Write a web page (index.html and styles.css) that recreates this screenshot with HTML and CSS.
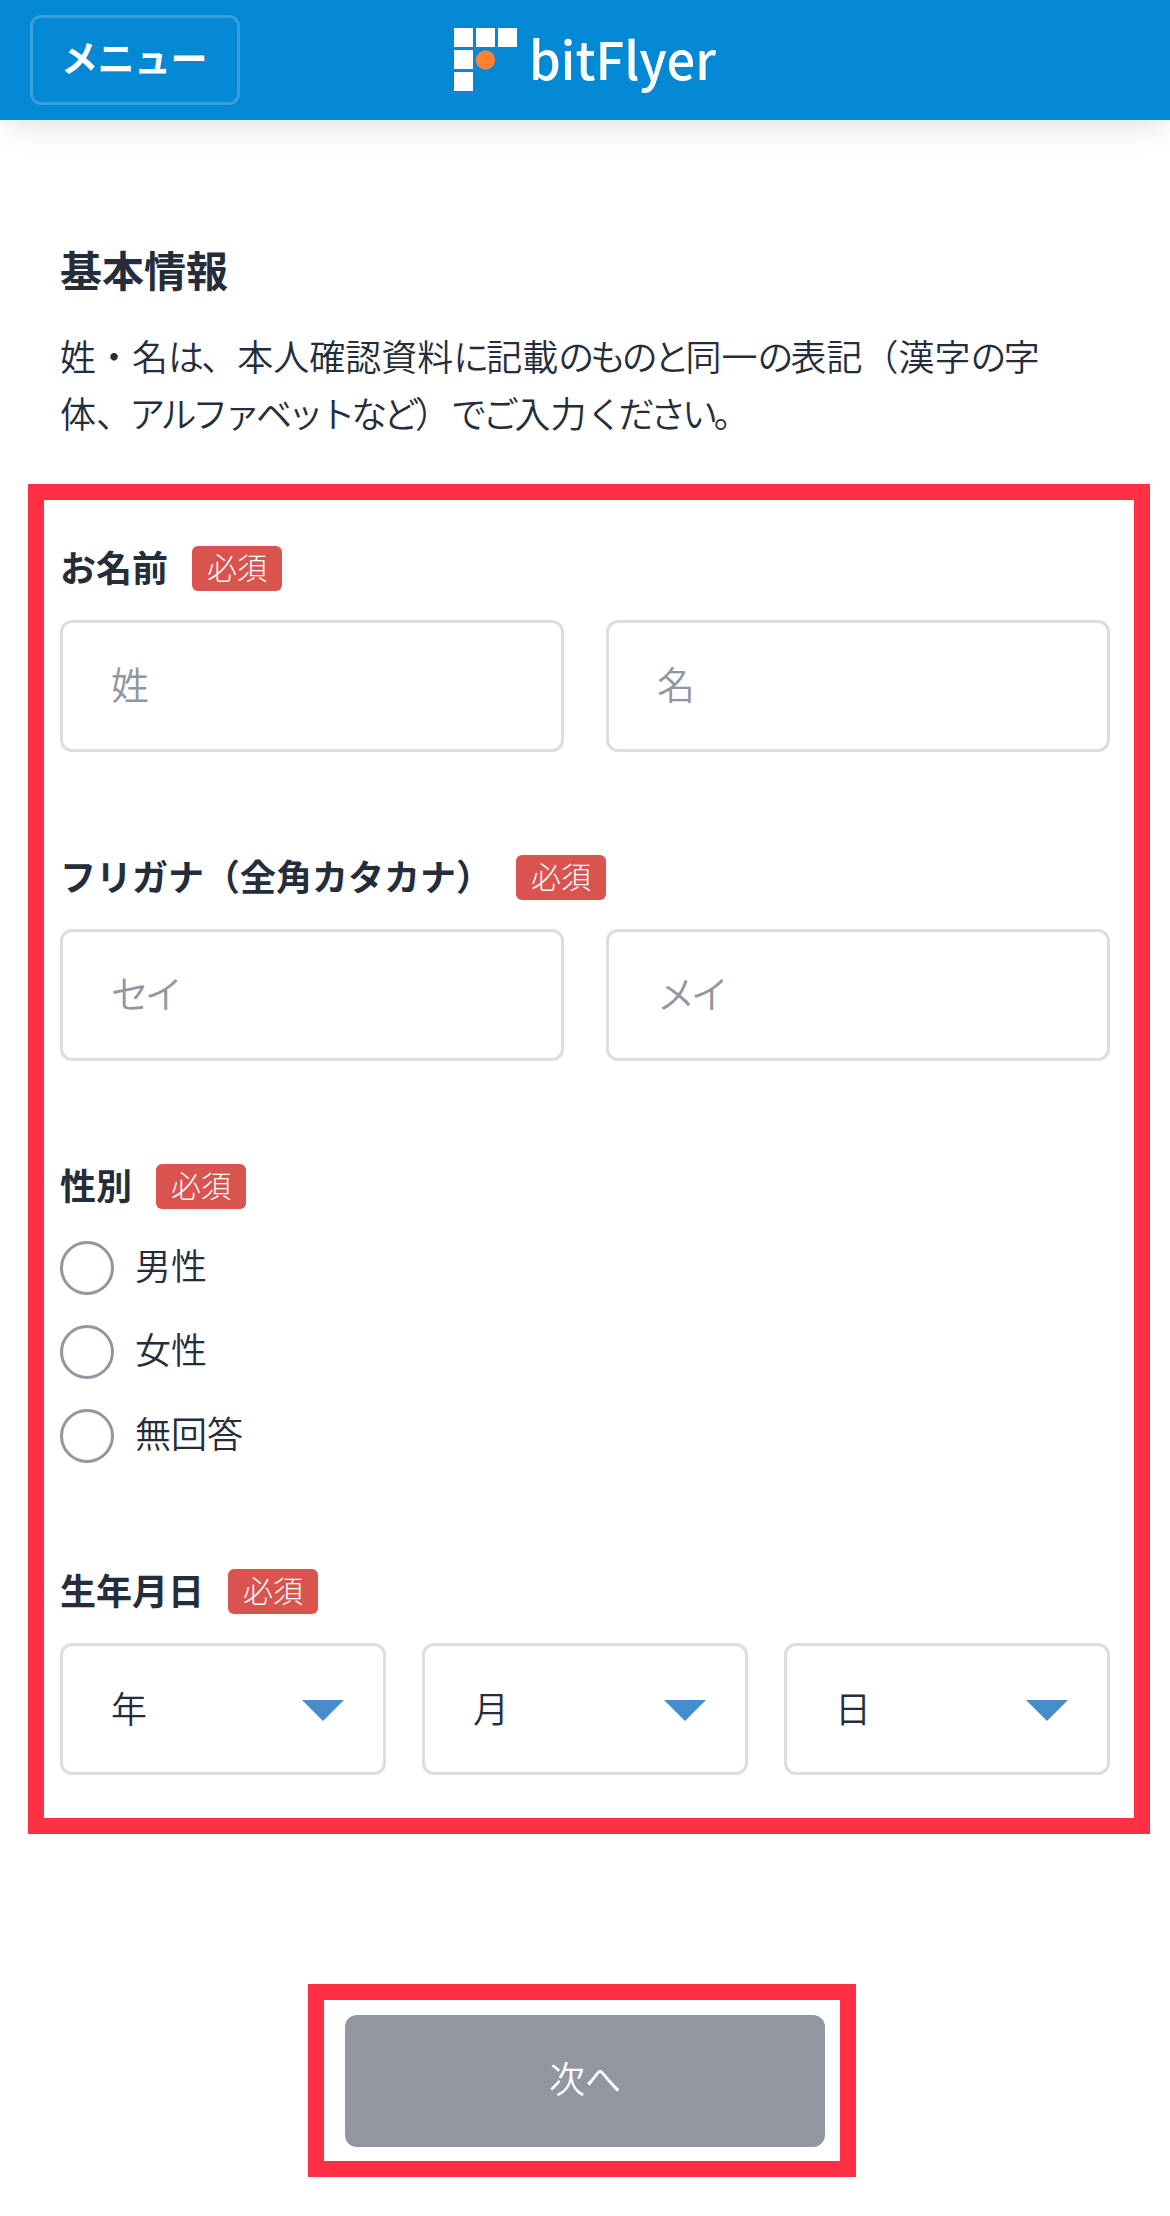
FILE: index.html
```
<!DOCTYPE html>
<html lang="ja">
<head>
    <meta charset="UTF-8">
    <meta name="viewport" content="width=device-width, initial-scale=1.0">
    <title>基本情報 | bitFlyer</title>
    <link rel="stylesheet" href="styles.css">
</head>
<body>
    <header class="header">
        <button type="button" class="menu-button">メニュー</button>
        <svg class="logo" width="270" height="90" viewBox="0 -10 270 90">
            <g fill="#fff">
                <rect x="0" y="3" width="19" height="19"/>
                <rect x="22" y="3" width="19" height="19"/>
                <rect x="44" y="3" width="19" height="19"/>
                <rect x="0" y="25" width="19" height="19"/>
                <rect x="0" y="47" width="19" height="19"/>
            </g>
            <circle cx="31.5" cy="35" r="9.7" fill="#ff8133"/>
            <text class="logo-text" x="75" y="54.5" textLength="187" lengthAdjust="spacingAndGlyphs">bitFlyer</text>
        </svg>
    </header>

    <main>
        <section class="intro">
            <h1>基本情報</h1>
            <p>姓・名<span class="kana">は</span>、本人確認資料<span class="kana">に</span>記載<span class="kana tight">のものと</span>同一<span class="kana">の</span>表記（漢字<span class="kana">の</span>字<br>体<span class="kana">、</span><span class="kana tight">アルファベットなど</span>）<span class="kana tight">でご</span>入力<span class="kana tight">ください</span>。</p>
        </section>

        <form id="basicForm">
            <div class="form-box">
                <div class="form-group">
                    <div class="label">お名前<span class="badge">必須</span></div>
                    <div class="row">
                        <input type="text" placeholder="姓">
                        <input type="text" placeholder="名">
                    </div>
                </div>
                <div class="form-group">
                    <div class="label">フリガナ（全角カタカナ）<span class="badge">必須</span></div>
                    <div class="row">
                        <input type="text" class="kana tight" placeholder="セイ">
                        <input type="text" class="kana tight" placeholder="メイ">
                    </div>
                </div>
                <div class="form-group">
                    <div class="label">性別<span class="badge">必須</span></div>
                    <div class="radios">
                        <label><input type="radio" name="gender" value="male">男性</label>
                        <label><input type="radio" name="gender" value="female">女性</label>
                        <label><input type="radio" name="gender" value="none">無回答</label>
                    </div>
                </div>
                <div class="form-group">
                    <div class="label">生年月日<span class="badge">必須</span></div>
                    <div class="row selects">
                        <div class="select">
                            <select><option>年</option></select>
                            <svg class="arrow" viewBox="0 0 42 21"><path d="M0 0h42L21 21z"/></svg>
                        </div>
                        <div class="select">
                            <select><option>月</option></select>
                            <svg class="arrow" viewBox="0 0 42 21"><path d="M0 0h42L21 21z"/></svg>
                        </div>
                        <div class="select">
                            <select><option>日</option></select>
                            <svg class="arrow" viewBox="0 0 42 21"><path d="M0 0h42L21 21z"/></svg>
                        </div>
                    </div>
                </div>
            </div>

            <div class="submit-box">
                <button type="submit" class="submit">次へ</button>
            </div>
        </form>
    </main>
</body>
</html>
```
FILE: styles.css
```
* {
    box-sizing: border-box;
}
body {
    margin: 0;
    background-color: #fff;
    color: #252d3b;
    font-family: "Noto Sans CJK JP", sans-serif;
    font-size: 36px;
    font-weight: 350;
}
input, select, button {
    font-family: inherit;
    font-weight: inherit;
    color: inherit;
    margin: 0;
}

/* Header */
.header {
    display: grid;
    grid-template-columns: 1fr auto 1fr;
    align-items: center;
    height: 120px;
    padding: 0 30px;
    background-color: #0388d3;
    box-shadow: 0 10px 30px -4px rgba(0, 0, 0, 0.12);
}
.menu-button {
    width: 210px;
    height: 90px;
    padding: 0 2px 7px 0;
    border: 3px solid #379fdc;
    border-radius: 11px;
    background: none;
    color: #fff;
    font-size: 37px;
    font-weight: bold;
    letter-spacing: -0.5px;
}
.logo {
    display: block;
    margin-left: 8px;
}
.logo-text {
    fill: #fff;
    font-size: 52px;
    font-weight: 500;
}

/* Intro */
.intro {
    padding: 118px 60px 0;
    height: 364px;
}
h1 {
    margin: 0 0 27px;
    font-size: 42px;
    line-height: 62px;
    font-weight: bold;
}
.intro p {
    margin: 0;
    line-height: 57px;
    white-space: nowrap;
}
.kana {
    letter-spacing: -2.9px;
}
.kana.tight {
    letter-spacing: -4.2px;
}

/* Form */
.form-box {
    width: 1122px;
    margin-left: 28px;
    padding: 46px 24px 43px 16px;
    border: 16px solid #ff3044;
}
.form-group {
    margin-bottom: 103px;
}
.form-group:last-child {
    margin-bottom: 0;
}
.label {
    display: flex;
    align-items: flex-start;
    height: 45px;
    margin-bottom: 29px;
    font-weight: bold;
    line-height: 41px;
}
.badge {
    margin-left: 24px;
    padding: 0 15px;
    height: 45px;
    border-radius: 6px;
    background-color: #d9534f;
    color: #fff;
    font-size: 30px;
    font-weight: 300;
}
.row {
    display: flex;
    gap: 42px;
}
.selects {
    gap: 36px;
}
input[type="text"], select {
    flex: 1;
    width: 100%;
    min-width: 0;
    height: 132px;
    padding: 0 48px 7px;
    border: 3px solid #ddd;
    border-radius: 12px;
    background-color: #fff;
    font-size: 38px;
}
::placeholder {
    color: #9196a0;
    opacity: 1;
}
.select {
    position: relative;
    flex: 1;
}
select {
    display: block;
    appearance: none;
    padding-bottom: 5px;
    font-size: 36px;
}
.arrow {
    position: absolute;
    top: 57px;
    right: 42px;
    width: 42px;
    height: 21px;
    fill: #468dcb;
    pointer-events: none;
}
.radios {
    display: flex;
    flex-direction: column;
    gap: 30px;
    padding: 3px 0;
}
.radios label {
    display: flex;
    align-items: flex-start;
    height: 54px;
    line-height: 47px;
}
input[type="radio"] {
    appearance: none;
    width: 54px;
    height: 54px;
    margin-right: 21px;
    border: 3px solid #9196a0;
    border-radius: 50%;
}

/* Submit */
.submit-box {
    width: 548px;
    height: 193px;
    margin: 150px 0 0 308px;
    padding: 15px 15px 14px 21px;
    border: 16px solid #ff3044;
}
.submit {
    display: block;
    width: 480px;
    height: 132px;
    padding: 0 0 8px;
    border: none;
    border-radius: 12px;
    background-color: #9196a0;
    color: #fff;
    font-size: 36px;
}
```
